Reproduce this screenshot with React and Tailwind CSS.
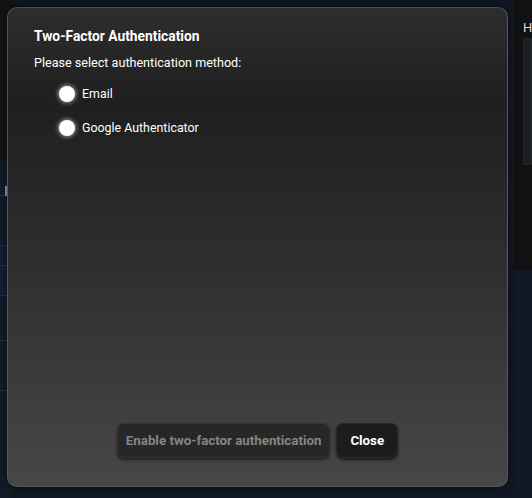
import { useState } from 'react'

const Radio = ({ label, checked, onChange }) => (
  <label className="flex items-center gap-[7px] cursor-pointer">
    <span
      className="w-4 h-4 rounded-full bg-white shadow-[0_0_4px_1px_rgba(255,255,255,0.55)] flex items-center justify-center"
      onClick={onChange}
    >
      {checked && <span className="w-2 h-2 rounded-full bg-[#222]" />}
    </span>
    <span className="text-[12.4px] text-white" onClick={onChange}>{label}</span>
  </label>
)

const App = () => {
  const [method, setMethod] = useState('')

  return (
    <div className="relative w-[532px] h-[498px] overflow-hidden bg-[#111722] font-['Roboto',sans-serif]">
      {/* page behind the modal */}
      <div className="flex h-full">
        <div className="w-[14px] flex flex-col">
          <div className="h-[160px] bg-[#131313]" />
          <div className="flex-1 flex flex-col bg-[#121a28]">
            <div className="h-[36px] border-b border-[#26303e]">
              <div className="mt-[26px] ml-[5px] w-[2px] h-[10px] bg-[#7fa8d0]" />
            </div>
            <div className="h-[50px] border-b border-[#26303e]" />
            <div className="h-[20px] border-b border-[#2a3042] bg-[#171c34]" />
            <div className="h-[30px] border-b border-[#26303e] bg-[#171c34]" />
            <div className="h-[45px] border-b border-[#26303e]" />
            <div className="h-[50px] border-b border-[#26303e]" />
            <div className="flex-1" />
          </div>
        </div>
        <div className="flex-1" />
        <div className="w-[18px] flex flex-col">
          <div className="h-[270px] bg-[#111111] pt-[20px] pl-[9px]">
            <div className="text-[13px] text-[#ddd] leading-[16px]">H</div>
            <div className="mt-[2px] h-[127px] bg-[#1b1f23] border border-[#23282d] rounded-tl-[2px]" />
          </div>
          <div className="flex-1 bg-[#111827]" />
        </div>
      </div>

      {/* modal */}
      <div className="absolute left-[7px] top-[7px] w-[501px] h-[480px] rounded-[10px] border border-[#585858] border-t-[#4c4c4c] bg-[linear-gradient(180deg,#2d2d2d_0%,#1f1f1f_20%,#2f2f2f_55%,#474747_100%)] shadow-[0_0_6px_rgba(0,0,0,0.6)] flex flex-col px-[26px] pt-[19px] pb-[28px]">
        <h2 className="text-[13.8px] font-bold text-white leading-[18px]">Two-Factor Authentication</h2>
        <p className="mt-[9px] text-[12.6px] text-white leading-[18px]">Please select authentication method:</p>
        <div className="mt-[13px] ml-[25px] flex flex-col gap-[15px]">
          <Radio label="Email" checked={method === 'email'} onChange={() => setMethod('email')} />
          <Radio label="Google Authenticator" checked={method === 'google'} onChange={() => setMethod('google')} />
        </div>
        <div className="flex-1" />
        <div className="flex justify-center gap-[6px]">
          <button
            disabled={!method}
            className="h-[35px] px-[8px] rounded-[7px] bg-[#272727] text-[13.3px] font-bold text-[#858585] shadow-[0_2px_3px_rgba(0,0,0,0.5)] border border-[#333]"
          >
            Enable two-factor authentication
          </button>
          <button className="h-[35px] px-[13px] rounded-[7px] bg-[#1c1c1c] text-[13.3px] font-bold text-white shadow-[0_2px_3px_rgba(0,0,0,0.6)] border border-[#2a2a2a]">
            Close
          </button>
        </div>
      </div>
    </div>
  )
}

export default App
